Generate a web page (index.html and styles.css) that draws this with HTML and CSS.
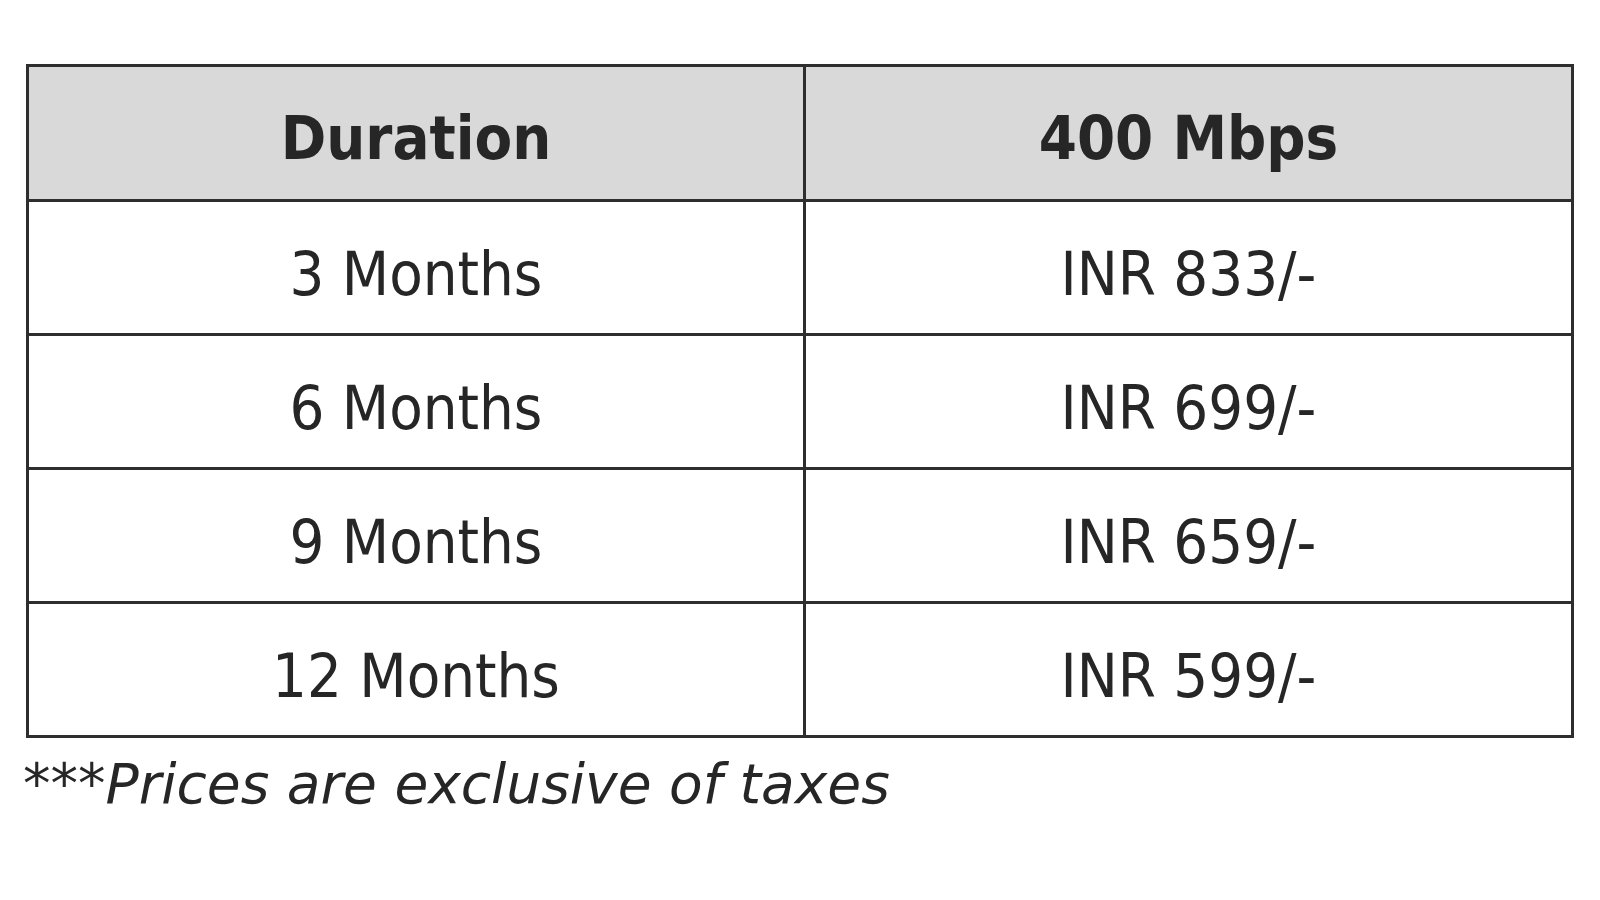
FILE: index.html
```html
<!DOCTYPE html>
<html>
<head>
<meta charset="utf-8">
<link rel="stylesheet" href="styles.css">
</head>
<body>
<div class="wrap">
  <table class="prices">
    <thead>
      <tr><th class="col-a">Duration</th><th>400 Mbps</th></tr>
    </thead>
    <tbody>
      <tr><td>3 Months</td><td>INR 833/-</td></tr>
      <tr><td>6 Months</td><td>INR 699/-</td></tr>
      <tr><td>9 Months</td><td>INR 659/-</td></tr>
      <tr><td>12 Months</td><td>INR 599/-</td></tr>
    </tbody>
  </table>
  <p class="note">***Prices are exclusive of taxes</p>
</div>
</body>
</html>
```

FILE: styles.css
```css
html, body {
  margin: 0;
  padding: 0;
  background: #ffffff;
}
.wrap {
  padding: 64px 0 0 26px;
  font-family: "DejaVu Sans", Verdana, sans-serif;
  font-stretch: condensed;
  color: #262626;
}
.prices {
  border-collapse: collapse;
  width: 1548px;
  table-layout: fixed;
}
.prices th, .prices td {
  border: 3px solid #2e2e2e;
  height: 119px;
  padding: 12px 0 0 0;
  text-align: center;
  vertical-align: middle;
  font-size: 61px;
  line-height: 1;
}
.prices th {
  background: #d9d9d9;
  font-weight: bold;
  height: 124px;
  padding-top: 8px;
}
.prices td {
  font-weight: normal;
}
.col-a {
  width: 774px;
}
.note {
  margin: 19px 0 0 -3px;
  font-size: 55px;
  font-style: italic;
  font-stretch: normal;
  line-height: 1;
}
```
